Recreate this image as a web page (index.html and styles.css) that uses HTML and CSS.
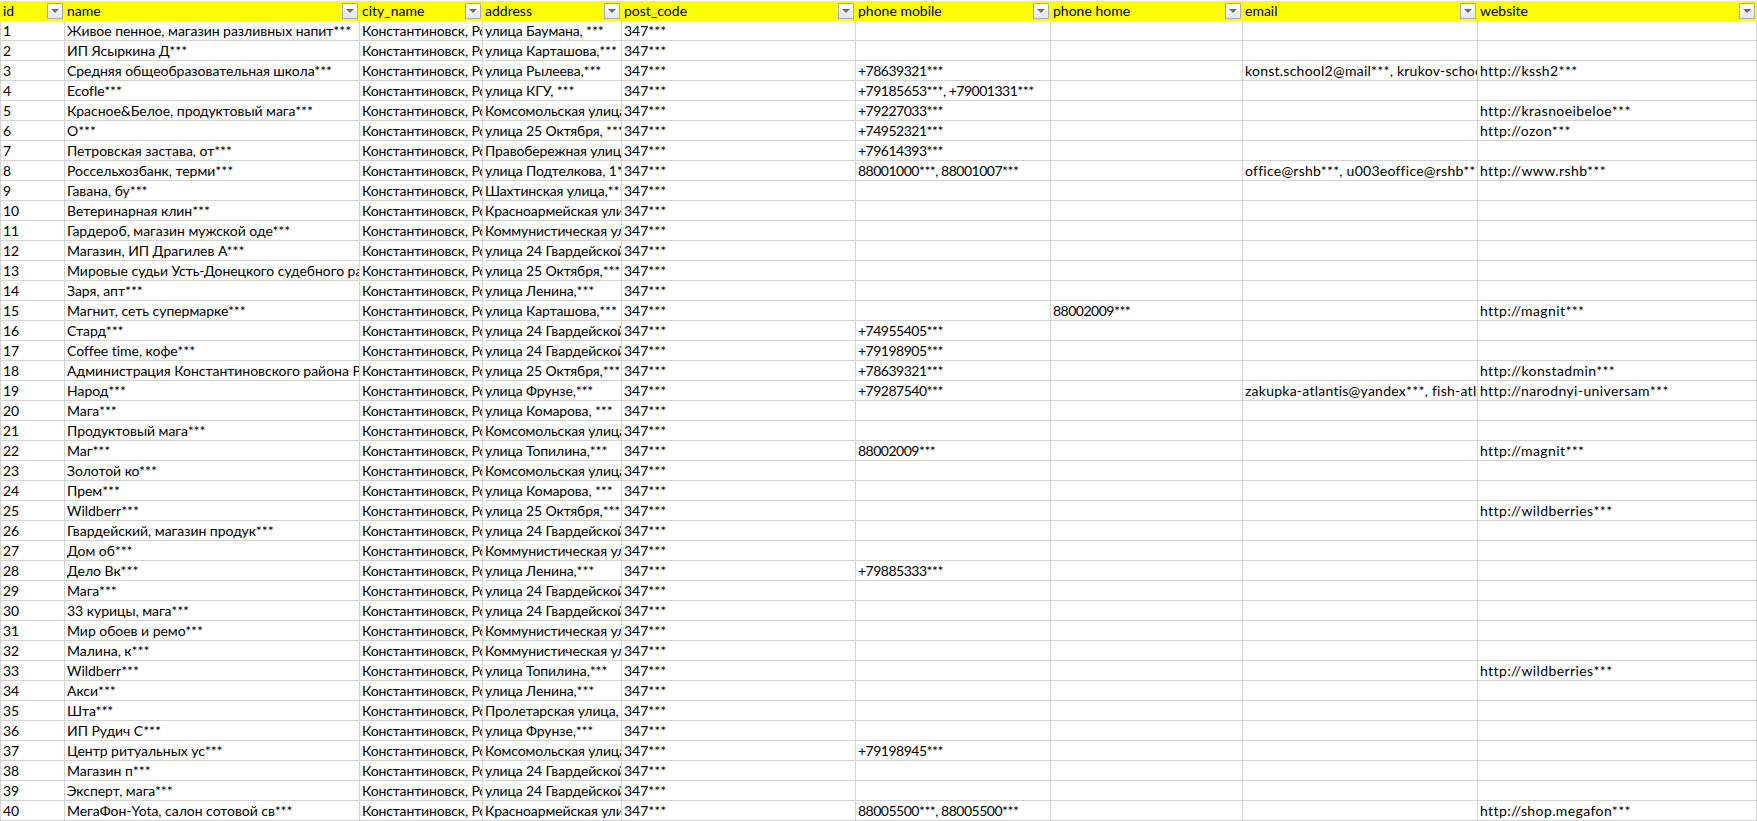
FILE: index.html
```html
<!DOCTYPE html>
<html lang="ru">
<head>
<meta charset="utf-8">
<title>Таблица</title>
<link rel="stylesheet" href="styles.css">
</head>
<body>
<table class="sheet">
<colgroup><col class="c-id"><col class="c-name"><col class="c-city"><col class="c-addr"><col class="c-post"><col class="c-mob"><col class="c-home"><col class="c-mail"><col class="c-web"></colgroup>
<thead><tr>
<th><div class="head"><span>id</span><span class="filter"></span></div></th>
<th><div class="head"><span>name</span><span class="filter"></span></div></th>
<th><div class="head"><span>city_name</span><span class="filter"></span></div></th>
<th><div class="head"><span>address</span><span class="filter"></span></div></th>
<th><div class="head"><span>post_code</span><span class="filter"></span></div></th>
<th><div class="head"><span>phone mobile</span><span class="filter"></span></div></th>
<th><div class="head"><span>phone home</span><span class="filter"></span></div></th>
<th><div class="head"><span>email</span><span class="filter"></span></div></th>
<th><div class="head"><span>website</span><span class="filter"></span></div></th>
</tr></thead>
<tbody>
<tr><td>1</td><td>Живое пенное, магазин разливных напит***</td><td>Константиновск, Ростовская область</td><td>улица Баумана, ***</td><td>347***</td><td></td><td></td><td></td><td></td></tr>
<tr><td>2</td><td>ИП Ясыркина Д***</td><td>Константиновск, Ростовская область</td><td>улица Карташова,***</td><td>347***</td><td></td><td></td><td></td><td></td></tr>
<tr><td>3</td><td>Средняя общеобразовательная школа***</td><td>Константиновск, Ростовская область</td><td>улица Рылеева,***</td><td>347***</td><td>+78639321***</td><td></td><td>konst.school2@mail***, krukov-school***</td><td>http://kssh2***</td></tr>
<tr><td>4</td><td>Ecofle***</td><td>Константиновск, Ростовская область</td><td>улица КГУ, ***</td><td>347***</td><td>+79185653***, +79001331***</td><td></td><td></td><td></td></tr>
<tr><td>5</td><td>Красное&amp;Белое, продуктовый мага***</td><td>Константиновск, Ростовская область</td><td>Комсомольская улица, ***</td><td>347***</td><td>+79227033***</td><td></td><td></td><td>http://krasnoeibeloe***</td></tr>
<tr><td>6</td><td>О***</td><td>Константиновск, Ростовская область</td><td>улица 25 Октября, ***</td><td>347***</td><td>+74952321***</td><td></td><td></td><td>http://ozon***</td></tr>
<tr><td>7</td><td>Петровская застава, от***</td><td>Константиновск, Ростовская область</td><td>Правобережная улица, ***</td><td>347***</td><td>+79614393***</td><td></td><td></td><td></td></tr>
<tr><td>8</td><td>Россельхозбанк, терми***</td><td>Константиновск, Ростовская область</td><td>улица Подтелкова, 1***</td><td>347***</td><td>88001000***, 88001007***</td><td></td><td>office@rshb***, u003eoffice@rshb***</td><td>http://www.rshb***</td></tr>
<tr><td>9</td><td>Гавана, бу***</td><td>Константиновск, Ростовская область</td><td>Шахтинская улица,***</td><td>347***</td><td></td><td></td><td></td><td></td></tr>
<tr><td>10</td><td>Ветеринарная клин***</td><td>Константиновск, Ростовская область</td><td>Красноармейская улица, ***</td><td>347***</td><td></td><td></td><td></td><td></td></tr>
<tr><td>11</td><td>Гардероб, магазин мужской оде***</td><td>Константиновск, Ростовская область</td><td>Коммунистическая улица, ***</td><td>347***</td><td></td><td></td><td></td><td></td></tr>
<tr><td>12</td><td>Магазин, ИП Драгилев А***</td><td>Константиновск, Ростовская область</td><td>улица 24 Гвардейской Дивизии</td><td>347***</td><td></td><td></td><td></td><td></td></tr>
<tr><td>13</td><td>Мировые судьи Усть-Донецкого судебного района</td><td>Константиновск, Ростовская область</td><td>улица 25 Октября,***</td><td>347***</td><td></td><td></td><td></td><td></td></tr>
<tr><td>14</td><td>Заря, апт***</td><td>Константиновск, Ростовская область</td><td>улица Ленина,***</td><td>347***</td><td></td><td></td><td></td><td></td></tr>
<tr><td>15</td><td>Магнит, сеть супермарке***</td><td>Константиновск, Ростовская область</td><td>улица Карташова,***</td><td>347***</td><td></td><td>88002009***</td><td></td><td>http://magnit***</td></tr>
<tr><td>16</td><td>Стард***</td><td>Константиновск, Ростовская область</td><td>улица 24 Гвардейской Дивизии</td><td>347***</td><td>+74955405***</td><td></td><td></td><td></td></tr>
<tr><td>17</td><td>Coffee time, кофе***</td><td>Константиновск, Ростовская область</td><td>улица 24 Гвардейской Дивизии</td><td>347***</td><td>+79198905***</td><td></td><td></td><td></td></tr>
<tr><td>18</td><td>Администрация Константиновского района Ростовской области</td><td>Константиновск, Ростовская область</td><td>улица 25 Октября,***</td><td>347***</td><td>+78639321***</td><td></td><td></td><td>http://konstadmin***</td></tr>
<tr><td>19</td><td>Народ***</td><td>Константиновск, Ростовская область</td><td>улица Фрунзе,***</td><td>347***</td><td>+79287540***</td><td></td><td>zakupka-atlantis@yandex***, fish-atlantis***</td><td>http://narodnyi-universam***</td></tr>
<tr><td>20</td><td>Мага***</td><td>Константиновск, Ростовская область</td><td>улица Комарова, ***</td><td>347***</td><td></td><td></td><td></td><td></td></tr>
<tr><td>21</td><td>Продуктовый мага***</td><td>Константиновск, Ростовская область</td><td>Комсомольская улица, ***</td><td>347***</td><td></td><td></td><td></td><td></td></tr>
<tr><td>22</td><td>Маг***</td><td>Константиновск, Ростовская область</td><td>улица Топилина,***</td><td>347***</td><td>88002009***</td><td></td><td></td><td>http://magnit***</td></tr>
<tr><td>23</td><td>Золотой ко***</td><td>Константиновск, Ростовская область</td><td>Комсомольская улица, ***</td><td>347***</td><td></td><td></td><td></td><td></td></tr>
<tr><td>24</td><td>Прем***</td><td>Константиновск, Ростовская область</td><td>улица Комарова, ***</td><td>347***</td><td></td><td></td><td></td><td></td></tr>
<tr><td>25</td><td>Wildberr***</td><td>Константиновск, Ростовская область</td><td>улица 25 Октября,***</td><td>347***</td><td></td><td></td><td></td><td>http://wildberries***</td></tr>
<tr><td>26</td><td>Гвардейский, магазин продук***</td><td>Константиновск, Ростовская область</td><td>улица 24 Гвардейской Дивизии</td><td>347***</td><td></td><td></td><td></td><td></td></tr>
<tr><td>27</td><td>Дом об***</td><td>Константиновск, Ростовская область</td><td>Коммунистическая улица, ***</td><td>347***</td><td></td><td></td><td></td><td></td></tr>
<tr><td>28</td><td>Дело Вк***</td><td>Константиновск, Ростовская область</td><td>улица Ленина,***</td><td>347***</td><td>+79885333***</td><td></td><td></td><td></td></tr>
<tr><td>29</td><td>Мага***</td><td>Константиновск, Ростовская область</td><td>улица 24 Гвардейской Дивизии</td><td>347***</td><td></td><td></td><td></td><td></td></tr>
<tr><td>30</td><td>33 курицы, мага***</td><td>Константиновск, Ростовская область</td><td>улица 24 Гвардейской Дивизии</td><td>347***</td><td></td><td></td><td></td><td></td></tr>
<tr><td>31</td><td>Мир обоев и ремо***</td><td>Константиновск, Ростовская область</td><td>Коммунистическая улица, ***</td><td>347***</td><td></td><td></td><td></td><td></td></tr>
<tr><td>32</td><td>Малина, к***</td><td>Константиновск, Ростовская область</td><td>Коммунистическая улица, ***</td><td>347***</td><td></td><td></td><td></td><td></td></tr>
<tr><td>33</td><td>Wildberr***</td><td>Константиновск, Ростовская область</td><td>улица Топилина,***</td><td>347***</td><td></td><td></td><td></td><td>http://wildberries***</td></tr>
<tr><td>34</td><td>Акси***</td><td>Константиновск, Ростовская область</td><td>улица Ленина,***</td><td>347***</td><td></td><td></td><td></td><td></td></tr>
<tr><td>35</td><td>Шта***</td><td>Константиновск, Ростовская область</td><td>Пролетарская улица, ***</td><td>347***</td><td></td><td></td><td></td><td></td></tr>
<tr><td>36</td><td>ИП Рудич С***</td><td>Константиновск, Ростовская область</td><td>улица Фрунзе,***</td><td>347***</td><td></td><td></td><td></td><td></td></tr>
<tr><td>37</td><td>Центр ритуальных ус***</td><td>Константиновск, Ростовская область</td><td>Комсомольская улица, ***</td><td>347***</td><td>+79198945***</td><td></td><td></td><td></td></tr>
<tr><td>38</td><td>Магазин п***</td><td>Константиновск, Ростовская область</td><td>улица 24 Гвардейской Дивизии</td><td>347***</td><td></td><td></td><td></td><td></td></tr>
<tr><td>39</td><td>Эксперт, мага***</td><td>Константиновск, Ростовская область</td><td>улица 24 Гвардейской Дивизии</td><td>347***</td><td></td><td></td><td></td><td></td></tr>
<tr><td>40</td><td>МегаФон-Yota, салон сотовой св***</td><td>Константиновск, Ростовская область</td><td>Красноармейская улица, ***</td><td>347***</td><td>88005500***, 88005500***</td><td></td><td></td><td>http://shop.megafon***</td></tr>
</tbody>
</table>
</body>
</html>
```
FILE: styles.css
```css
html, body {
  margin: 0;
  padding: 0;
  background: #fff;
  overflow: hidden;
}
.sheet {
  width: 1757px;
  table-layout: fixed;
  border-collapse: separate;
  border-spacing: 0;
  font-family: "Lato", "Open Sans", sans-serif;
  font-size: 14px;
  color: #000;
  margin-top: 1px;
}
.c-id { width: 65px; }
.c-name { width: 295px; }
.c-city { width: 123px; }
.c-addr { width: 139px; }
.c-post { width: 234px; }
.c-mob { width: 195px; }
.c-home { width: 192px; }
.c-mail { width: 235px; }
.c-web { width: 279px; }
th, td {
  height: 20px;
  box-sizing: border-box;
  padding: 0 0 0 2px;
  overflow: hidden;
  white-space: nowrap;
  text-align: left;
  font-weight: 400;
  border-right: 1px solid #d4d4d4;
  border-bottom: 1px solid #d4d4d4;
  line-height: 19px;
}
th:first-child, td:first-child { border-left: 1px solid #d4d4d4; }
td:nth-child(2) { letter-spacing: -0.03px; }
td:nth-child(3) { letter-spacing: -0.15px; }
td:nth-child(4) { letter-spacing: -0.12px; }
td:nth-child(6), td:nth-child(7) { letter-spacing: -0.5px; }
td:nth-child(8) { letter-spacing: 0.25px; }
td:nth-child(9) { letter-spacing: 0.4px; }
th {
  background: #ffff00;
  border-color: #ffff00;
  padding: 0 1px 0 2px;
}
th:first-child { border-left-color: #ffff00; }
.head {
  display: flex;
  align-items: center;
  justify-content: space-between;
  height: 19px;
}
.filter {
  flex: none;
  width: 16px;
  height: 16px;
  box-sizing: border-box;
  border: 1px solid #a5adbb;
  background: linear-gradient(#ffffff, #e4e7ec);
  display: flex;
  align-items: center;
  justify-content: center;
}
.filter::before {
  content: "";
  width: 0;
  height: 0;
  border-left: 4px solid transparent;
  border-right: 4px solid transparent;
  border-top: 4px solid #6d6d6d;
}
```
